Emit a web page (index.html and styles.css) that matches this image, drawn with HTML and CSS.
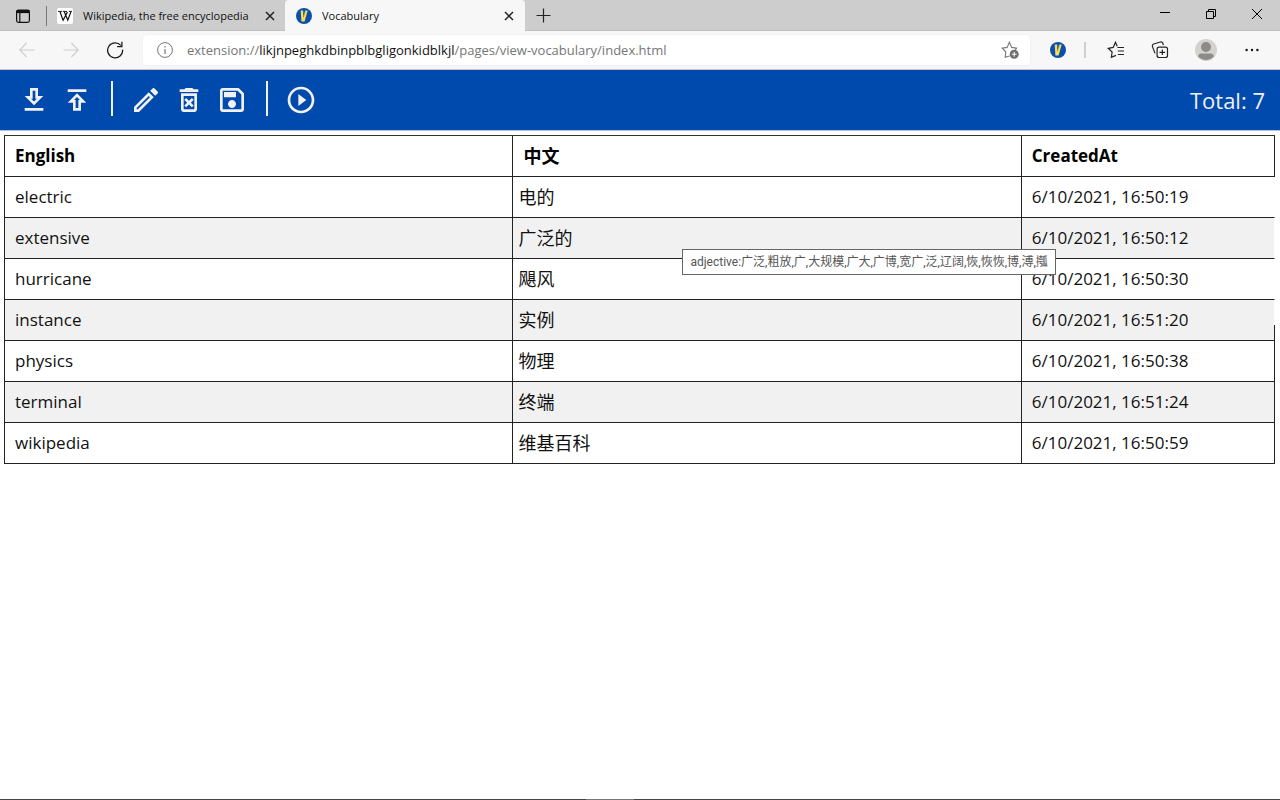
FILE: index.html
```html
<!DOCTYPE html>
<html lang="en">
<head>
<meta charset="utf-8">
<title>Vocabulary</title>
<link rel="stylesheet" href="styles.css">
</head>
<body>
<svg width="0" height="0" class="defs" aria-hidden="true">
  <symbol id="badge" viewBox="0 0 16 16">
    <circle cx="8" cy="8" r="8" fill="#0b4fae"/>
    <path d="M4.7 2.6h2.5l.1 6.3 2-6.3h2.4L8.6 13.4H5.4z" fill="#f7dd55"/>
    <path d="M7.3 9.2l1.9-6.1" stroke="#7d8460" stroke-width=".7"/>
  </symbol>
  <symbol id="close" viewBox="0 0 10 10">
    <path d="M1 1l8 8M9 1L1 9" stroke="#222" stroke-width="1.5" fill="none"/>
  </symbol>
</svg>
<div class="browser">
  <header class="tabstrip">
    <button class="tab-actions" aria-label="Tab actions">
      <svg width="16" height="16" viewBox="0 0 16 16" fill="none" stroke="#111"><rect x="1.6" y="2.1" width="12.8" height="12.3" rx="1.8" stroke-width="1.2"/><path d="M1.6 3.6h12.8" stroke-width="3"/><path d="M4.8 5v9" stroke-width="1.2"/></svg>
    </button>
    <span class="strip-divider"></span>
    <div class="tab">
      <svg class="favicon" width="16" height="16" viewBox="0 0 16 16"><rect width="16" height="16" rx="2" fill="#fff"/><path d="M1 3.4h4.2M6 3.4h4M11.8 3.4H15" stroke="#111" stroke-width=".9"/><path d="M2.9 3.5l3.2 8.7L10.4 4M7.2 3.5l3.6 8.7L14 3.6" stroke="#111" stroke-width="1.2" fill="none"/></svg>
      <span class="tab-title">Wikipedia, the free encyclopedia</span>
      <button class="tab-close" aria-label="Close tab"><svg width="10" height="10"><use href="#close"/></svg></button>
    </div>
    <div class="tab tab-active">
      <svg class="favicon" width="16" height="16"><use href="#badge"/></svg>
      <span class="tab-title">Vocabulary</span>
      <button class="tab-close" aria-label="Close tab"><svg width="10" height="10"><use href="#close"/></svg></button>
    </div>
    <button class="new-tab" aria-label="New tab"><svg width="15" height="15" viewBox="0 0 15 15"><path d="M7.5 .5v14M.5 7.5h14" stroke="#222" stroke-width="1.2"/></svg></button>
    <div class="window-controls">
      <button aria-label="Minimize"><svg width="10" height="10" viewBox="0 0 10 10"><path d="M0 3.5h10" stroke="#000"/></svg></button>
      <button aria-label="Restore"><svg width="10" height="10" viewBox="0 0 10 10" fill="none" stroke="#000"><path d="M.5 2.5h7v7h-7zM2.5 2.5v-2h7v7h-2"/></svg></button>
      <button aria-label="Close window"><svg width="10" height="10" viewBox="0 0 10 10"><path d="M0 0l10 10M10 0L0 10" stroke="#000"/></svg></button>
    </div>
  </header>
  <nav class="navbar">
    <button class="nav-button" aria-label="Back" disabled><svg width="16" height="16" viewBox="0 0 16 16" fill="none" stroke="#cdcdcd" stroke-width="1.1"><path d="M15.5 8H.8M7.6 1L.7 8l6.9 7"/></svg></button>
    <button class="nav-button" aria-label="Forward" disabled><svg width="16" height="16" viewBox="0 0 16 16" fill="none" stroke="#cdcdcd" stroke-width="1.1"><path d="M.5 8h14.7M8.4 1l6.9 7-6.9 7"/></svg></button>
    <button class="nav-button" aria-label="Refresh"><svg width="18" height="18" viewBox="0 0 18 18" fill="none" stroke="#1b1b1b" stroke-width="1.3"><path d="M16.6 8.6A7.5 7.5 0 1 1 14.8 4.4"/><path d="M15.9 .8v4.8h-4.8"/></svg></button>
    <div class="address">
      <svg width="16" height="16" viewBox="0 0 16 16" fill="none" stroke="#777"><circle cx="8" cy="8" r="7.4"/><path d="M8 7v5M8 4v1.4" stroke-width="1.2"/></svg>
      <div class="url" role="textbox" aria-label="Address" contenteditable="true" spellcheck="false">extension://<span class="url-host">likjnpeghkdbinpblbgligonkidblkjl</span>/pages/view-vocabulary/index.html</div>
      <button class="icon-button" aria-label="Add to favorites"><svg width="18" height="18" viewBox="0 0 18 18"><path d="M8.6 15l-4.4 1.2.6-5.2L1.2 7.2l4.9-.8L8.4 1.2l2.3 5.2 4.9.8-1.4 1.6" fill="none" stroke="#777" stroke-width="1.1"/><circle cx="13.2" cy="13.2" r="4.5" fill="#6e6e6e"/><path d="M13.2 10.8v4.8M10.8 13.2h4.8" stroke="#fff"/></svg></button>
    </div>
    <button class="icon-button extension" aria-label="Vocabulary extension"><svg width="16" height="16"><use href="#badge"/></svg></button>
    <span class="nav-divider"></span>
    <button class="icon-button favorites" aria-label="Favorites"><svg width="18" height="18" viewBox="0 0 18 18" fill="none" stroke="#222" stroke-width="1.2"><path d="M9 14.4l-4.6 2 .7-5.4L1.2 7.3l5-.9L8.5 1.3l1.7 3.9"/><path d="M10.4 6.5H17M10.8 10H17M10.8 13.5H17"/></svg></button>
    <button class="icon-button collections" aria-label="Collections"><svg width="18" height="18" viewBox="0 0 18 18" fill="none" stroke="#222" stroke-width="1.2"><rect x="6.1" y="6.1" width="10.4" height="10.4" rx="2"/><path d="M11.3 8.5v5.6M8.5 11.3h5.6M4 12.4L1.5 5.6a2 2 0 0 1 1.2-2.6L9.4 1a2 2 0 0 1 2.4 1.2l.6 1.8"/></svg></button>
    <button class="icon-button profile" aria-label="Profile"><svg width="22" height="22" viewBox="0 0 22 22"><circle cx="11" cy="11" r="11" fill="#d4d2cf"/><circle cx="11" cy="8" r="5" fill="#8d8a87"/><path d="M3.2 17.5c0-1.8 1.5-2.9 3.3-2.9h9c1.8 0 3.3 1.1 3.3 2.9a10.5 10.5 0 0 1-15.6 0z" fill="#8d8a87"/></svg></button>
    <button class="icon-button more" aria-label="Settings and more"><svg width="14" height="4" viewBox="0 0 14 4" fill="#111"><circle cx="1.6" cy="2" r="1.2"/><circle cx="7" cy="2" r="1.2"/><circle cx="12.4" cy="2" r="1.2"/></svg></button>
  </nav>
  <div class="toolbar">
    <button class="tool" aria-label="Download"><svg viewBox="0 0 24 24"><path d="M19 9h-4V3H9v6H5l7 7 7-7zm-8 2V5h2v6h1.17L12 13.17 9.83 11H11zm-6 7h14v2H5z"/></svg></button>
    <button class="tool" aria-label="Upload"><svg viewBox="0 0 24 24"><path d="M5 4h14v2H5zm0 10h4v6h6v-6h4l-7-7-7 7zm8-2v6h-2v-6H9.83L12 9.83 14.17 12H13z"/></svg></button>
    <span class="tool-divider"></span>
    <button class="tool" aria-label="Edit"><svg viewBox="0 0 24 24"><path d="M14.06 9.02l.92.92L5.92 19H5v-.92l9.06-9.06M17.66 3c-.25 0-.51.1-.7.29l-1.83 1.83 3.75 3.75 1.83-1.83c.39-.39.39-1.02 0-1.41l-2.34-2.34c-.2-.2-.45-.29-.71-.29zm-3.6 3.19L3 17.25V21h3.75L17.81 9.94l-3.75-3.75z"/></svg></button>
    <button class="tool" aria-label="Delete all"><svg viewBox="0 0 24 24"><path d="M14.12 10.47L12 12.59l-2.13-2.12-1.41 1.41L10.59 14l-2.12 2.12 1.41 1.41L12 15.41l2.12 2.12 1.41-1.41L13.41 14l2.12-2.12zM15.5 4l-1-1h-5l-1 1H5v2h14V4zM6 19c0 1.1.9 2 2 2h8c1.1 0 2-.9 2-2V7H6v12zM8 9h8v10H8V9z"/></svg></button>
    <button class="tool" aria-label="Save"><svg viewBox="0 0 24 24"><path d="M17 3H5c-1.11 0-2 .9-2 2v14c0 1.1.89 2 2 2h14c1.1 0 2-.9 2-2V7l-4-4zm2 16H5V5h11.17L19 7.83V19zm-7-7c-1.66 0-3 1.34-3 3s1.34 3 3 3 3-1.34 3-3-1.34-3-3-3zM6 6h9v4H6z"/></svg></button>
    <span class="tool-divider"></span>
    <button class="tool" aria-label="Practice"><svg viewBox="0 0 24 24"><path d="M12 2C6.48 2 2 6.48 2 12s4.48 10 10 10 10-4.48 10-10S17.52 2 12 2zm0 18c-4.41 0-8-3.59-8-8s3.59-8 8-8 8 3.59 8 8-3.59 8-8 8zM10 16.5l6-4.5-6-4.5z"/></svg></button>
    <span class="total">Total: 7</span>
  </div>
  <main class="content">
    <table class="words">
      <thead>
        <tr><th scope="col">English</th><th scope="col" class="zh-head">中文</th><th scope="col">CreatedAt</th></tr>
      </thead>
      <tbody>
        <tr class="open"><td>electric</td><td class="zh">电的</td><td>6/10/2021, 16:50:19</td></tr>
        <tr class="open"><td>extensive</td><td class="zh hovered">广泛的<span class="tooltip" role="tooltip">adjective:广泛,粗放,广,大规模,广大,广博,宽广,泛,辽阔,恢,恢恢,博,溥,摦</span></td><td>6/10/2021, 16:50:12</td></tr>
        <tr class="open"><td>hurricane</td><td class="zh">飓风</td><td>6/10/2021, 16:50:30</td></tr>
        <tr class="open half"><td>instance</td><td class="zh">实例</td><td>6/10/2021, 16:51:20</td></tr>
        <tr><td>physics</td><td class="zh">物理</td><td>6/10/2021, 16:50:38</td></tr>
        <tr><td>terminal</td><td class="zh">终端</td><td>6/10/2021, 16:51:24</td></tr>
        <tr><td>wikipedia</td><td class="zh">维基百科</td><td>6/10/2021, 16:50:59</td></tr>
      </tbody>
    </table>
  </main>
  <footer class="edge"><span class="edge-mark"></span></footer>
</div>
</body>
</html>
```
FILE: styles.css
```css
* { box-sizing: border-box; }
body {
  margin: 0;
  background: #fff;
  color: #111;
  font-family: "Open Sans", "Noto Sans", "Noto Sans CJK SC", sans-serif;
}
button {
  display: flex;
  align-items: center;
  justify-content: center;
  padding: 0;
  border: 0;
  background: none;
}
svg { display: block; flex: none; }
.defs { position: absolute; }
.browser { display: flex; flex-direction: column; min-height: 100vh; }

.tabstrip {
  display: flex;
  align-items: center;
  height: 31px;
  background: #cdcdcd;
  box-shadow: inset 0 -1px #c0c0c0;
}
.tab-actions { width: 46px; height: 30px; }
.strip-divider { width: 1px; height: 20px; background: #777; }
.tab {
  display: flex;
  align-items: center;
  width: 238px;
  height: 31px;
  padding: 0 9px 0 10px;
}
.tab-active {
  width: 240px;
  padding: 0 10px 0 11px;
  border-radius: 4px 4px 0 0;
  background: #f7f7f7;
}
.favicon { margin-right: 10px; }
.tab-title { flex: 1; font-size: 11px; line-height: 16px; white-space: nowrap; }
.tab-close { width: 12px; height: 16px; }
.new-tab { width: 36px; height: 30px; }
.window-controls { display: flex; align-self: flex-start; margin-left: auto; }
.window-controls button { width: 46px; height: 27px; }

.navbar {
  display: flex;
  align-items: center;
  height: 39px;
  padding: 0 18px;
  border-bottom: 1px solid #c4c4c4;
  background: #f7f7f7;
}
.nav-button { width: 18px; height: 30px; margin-right: 26px; }
.address {
  display: flex;
  flex: 1;
  align-items: center;
  height: 30px;
  margin-left: -7px;
  padding: 0 11px 0 14px;
  border-radius: 4px;
  background: #fff;
  box-shadow: 0 0 2px #e4e4e4;
}
.url {
  flex: 1;
  margin-left: 14px;
  color: #767676;
  font-size: 13px;
  line-height: 20px;
  white-space: nowrap;
  outline: 0;
}
.url-host { color: #111; }
.extension { margin-left: 20px; }
.nav-divider { width: 2px; height: 16px; margin: 0 21px 0 18px; background: #cfcfcf; }
.collections { margin-left: 26px; }
.profile { margin-left: 26px; }
.more { margin: 0 3px 0 28px; }

.toolbar {
  display: flex;
  align-items: center;
  gap: 11px;
  height: 61px;
  padding: 0 15px 0 18px;
  border-bottom: 1px solid #abc3e5;
  background: #004aad;
}
.tool { width: 32px; height: 32px; }
.tool svg { width: 32px; height: 32px; fill: #f1f1f1; }
.tool-divider { width: 2px; height: 35px; margin: 0 6px 3px 7px; background: #f1f1f1; }
.total { margin-left: auto; color: #f1f1f1; font-size: 22px; line-height: 32px; }

.content { flex: 1; padding: 4px 5px 4px 4px; }
.words {
  width: 100%;
  border-collapse: separate;
  border-spacing: 0;
  border-top: 1px solid #333;
  table-layout: fixed;
  font-size: 17px;
  line-height: 24px;
}
.words th, .words td {
  height: 41px;
  padding: 0 10px;
  border-bottom: 1px solid #222;
  border-left: 1px solid #222;
  background-clip: padding-box;
  text-align: left;
  white-space: nowrap;
}
.words th { width: 40%; font-weight: 700; color: #000; }
.words .zh-head { font-size: 18px; }
.words th:last-child { width: 20%; }
.words th:last-child, .words td:last-child { border-right: 1px solid #222; }
.words tbody tr:nth-child(even) td { background-color: #f1f1f1; }
.words .zh { padding-left: 5px; font-size: 18px; }
.words .open td:last-child { border-right-color: transparent; }
.half td:last-child { position: relative; }
.half td:last-child::after {
  content: "";
  position: absolute;
  right: -1px;
  bottom: -1px;
  width: 1px;
  height: 16px;
  background: #222;
}
.hovered { position: relative; }
.tooltip {
  position: absolute;
  z-index: 1;
  top: 31px;
  left: 169px;
  padding: 0 7px;
  border: 1px solid #666;
  background: #fff;
  color: #555;
  font-family: Roboto, "Noto Sans CJK SC", sans-serif;
  font-size: 12px;
  line-height: 24px;
}

.edge { display: flex; justify-content: center; height: 1px; padding-right: 60px; background: #444; }
.edge-mark { width: 48px; background: #777; }
```
